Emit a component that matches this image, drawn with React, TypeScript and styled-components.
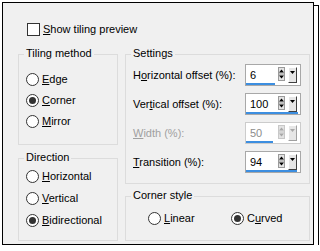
import React from 'react';
import styled, { createGlobalStyle } from 'styled-components';

const Global = createGlobalStyle`
  html, body { margin: 0; padding: 0; background: #fff; }
  body {
    font-family: "Liberation Sans", Arial, sans-serif;
    font-size: 11px;
    color: #000;
  }
`;

const Page = styled.div`
  padding: 2px 0 0 2px;
`;

const Dialog = styled.div`
  box-sizing: border-box;
  width: 312px;
  height: 243px;
  border: 1px solid #000;
  background: #f0f0f0;
  box-shadow: 4px 4px 0 0 #fff, 4px 4px 0 1px #000;
  padding: 20px 0 0 15px;
  display: flex;
  flex-direction: column;
`;

const CheckRow = styled.label`
  display: flex;
  align-items: center;
  gap: 3px;
  height: 13px;
  line-height: 13px;
  margin-left: 9px;
`;

const CheckBox = styled.span`
  box-sizing: border-box;
  width: 13px;
  height: 13px;
  border: 1px solid #333;
  background: #fff;
`;

const Columns = styled.div`
  display: flex;
  gap: 7px;
  margin-top: 18px;
`;

const Column = styled.div<{ $width: number; $gap: number }>`
  width: ${(p) => p.$width}px;
  display: flex;
  flex-direction: column;
  gap: ${(p) => p.$gap}px;
`;

const Group = styled.div<{ $height: number; $pt: number; $pl: number }>`
  position: relative;
  box-sizing: border-box;
  height: ${(p) => p.$height}px;
  border: 1px solid #dcdcdc;
  padding: ${(p) => p.$pt}px 8px 0 ${(p) => p.$pl}px;
`;

const Legend = styled.span`
  position: absolute;
  top: -8px;
  left: 5px;
  padding: 0 2px;
  background: #f0f0f0;
  line-height: 13px;
`;

const RadioList = styled.div<{ $gap: number }>`
  display: flex;
  flex-direction: column;
  gap: ${(p) => p.$gap}px;
`;

const RadioItem = styled.label`
  display: flex;
  align-items: center;
  gap: 3px;
  height: 13px;
  line-height: 13px;
  white-space: nowrap;
`;

const RadioCircle = styled.span<{ $checked?: boolean }>`
  box-sizing: border-box;
  width: 13px;
  height: 13px;
  border-radius: 50%;
  border: 1px solid #333;
  background: #fff;
  display: flex;
  align-items: center;
  justify-content: center;
  &::after {
    content: '';
    display: ${(p) => (p.$checked ? 'block' : 'none')};
    width: 7px;
    height: 7px;
    border-radius: 50%;
    background: #333;
  }
`;

const Key = styled.span`
  text-decoration: underline;
  text-underline-offset: 1px;
`;

const SettingsGrid = styled.div`
  display: grid;
  grid-template-columns: 1fr 56px;
  grid-auto-rows: 22px;
  row-gap: 7px;
  align-items: center;
`;

const FieldLabel = styled.span<{ $disabled?: boolean }>`
  color: ${(p) => (p.$disabled ? '#a0a0a0' : '#000')};
  white-space: nowrap;
`;

const Field = styled.div<{ $disabled?: boolean }>`
  box-sizing: border-box;
  width: 56px;
  height: 22px;
  border: 1px solid ${(p) => (p.$disabled ? '#cccccc' : '#a8a8a8')};
  background: #fff;
  display: flex;
  flex-direction: column;
`;

const FieldTop = styled.div`
  display: flex;
  align-items: flex-start;
  height: 18px;
`;

const Value = styled.span<{ $disabled?: boolean }>`
  flex: 1;
  padding: 3px 0 0 4px;
  line-height: 14px;
  color: ${(p) => (p.$disabled ? '#8c8c8c' : '#000')};
`;

const Spin = styled.svg`
  display: block;
  margin-top: 2px;
  flex: none;
`;

const Drop = styled.div<{ $disabled?: boolean }>`
  box-sizing: border-box;
  flex: none;
  width: 9px;
  height: 16px;
  margin: 2px 3px 0 3px;
  background: #e6e6e6;
  border-top: 1px solid #fff;
  border-left: 1px solid #fff;
  border-right: 1px solid ${(p) => (p.$disabled ? '#a0a0a0' : '#404040')};
  border-bottom: 1px solid ${(p) => (p.$disabled ? '#a0a0a0' : '#404040')};
  display: flex;
  justify-content: center;
  padding-top: 3px;
`;

const Bar = styled.div`
  height: 2px;
  background: #3c8ee0;
`;

const CornerRow = styled.div`
  display: grid;
  grid-template-columns: 83px auto;
`;

type SpinProps = { value: string; bar: number; disabled?: boolean };

function SpinField({ value, bar, disabled }: SpinProps) {
  const ink = disabled ? '#a8a8a8' : '#000';
  const edge = disabled ? '#c8c8c8' : '#9a9a9a';
  return (
    <Field $disabled={disabled}>
      <FieldTop>
        <Value $disabled={disabled}>{value}</Value>
        <Spin width="7" height="14" viewBox="0 0 7 14">
          <rect x="0.5" y="0.5" width="6" height="13" fill="#e3e3e3" stroke={edge} />
          <line x1="0" y1="7" x2="7" y2="7" stroke={edge} />
          <polygon points="1,5.5 6,5.5 3.5,2.5" fill={ink} />
          <polygon points="1,8.5 6,8.5 3.5,11.5" fill={ink} />
        </Spin>
        <Drop $disabled={disabled}>
          <svg width="5" height="3" viewBox="0 0 5 3">
            <polygon points="0,0 5,0 2.5,3" fill={ink} />
          </svg>
        </Drop>
      </FieldTop>
      <Bar style={{ width: `${bar}px` }} />
    </Field>
  );
}

type RadioProps = { checked?: boolean; pre?: string; k: string; post: string };

function Radio({ checked, pre, k, post }: RadioProps) {
  return (
    <RadioItem>
      <RadioCircle $checked={checked} />
      <span>
        {pre}
        <Key>{k}</Key>
        {post}
      </span>
    </RadioItem>
  );
}

export default function App() {
  return (
    <Page>
      <Global />
      <Dialog>
        <CheckRow>
          <CheckBox />
          <span>
            <Key>S</Key>how tiling preview
          </span>
        </CheckRow>
        <Columns>
          <Column $width={100} $gap={13}>
            <Group $height={91} $pt={18} $pl={7}>
              <Legend>Tiling method</Legend>
              <RadioList $gap={8}>
                <Radio k="E" post="dge" />
                <Radio checked k="C" post="orner" />
                <Radio k="M" post="irror" />
              </RadioList>
            </Group>
            <Group $height={83} $pt={11} $pl={7}>
              <Legend>Direction</Legend>
              <RadioList $gap={9}>
                <Radio k="H" post="orizontal" />
                <Radio k="V" post="ertical" />
                <Radio checked k="B" post="idirectional" />
              </RadioList>
            </Group>
          </Column>
          <Column $width={185} $gap={12}>
            <Group $height={130} $pt={9} $pl={7}>
              <Legend>Settings</Legend>
              <SettingsGrid>
                <FieldLabel>
                  H<Key>o</Key>rizontal offset (%):
                </FieldLabel>
                <SpinField value="6" bar={29} />
                <FieldLabel>
                  Ver<Key>t</Key>ical offset (%):
                </FieldLabel>
                <SpinField value="100" bar={52} />
                <FieldLabel $disabled>
                  <Key>W</Key>idth (%):
                </FieldLabel>
                <SpinField value="50" bar={27} disabled />
                <FieldLabel>
                  <Key>T</Key>ransition (%):
                </FieldLabel>
                <SpinField value="94" bar={51} />
              </SettingsGrid>
            </Group>
            <Group $height={45} $pt={15} $pl={22}>
              <Legend>Corner style</Legend>
              <CornerRow>
                <Radio k="L" post="inear" />
                <Radio checked pre="C" k="u" post="rved" />
              </CornerRow>
            </Group>
          </Column>
        </Columns>
      </Dialog>
    </Page>
  );
}
